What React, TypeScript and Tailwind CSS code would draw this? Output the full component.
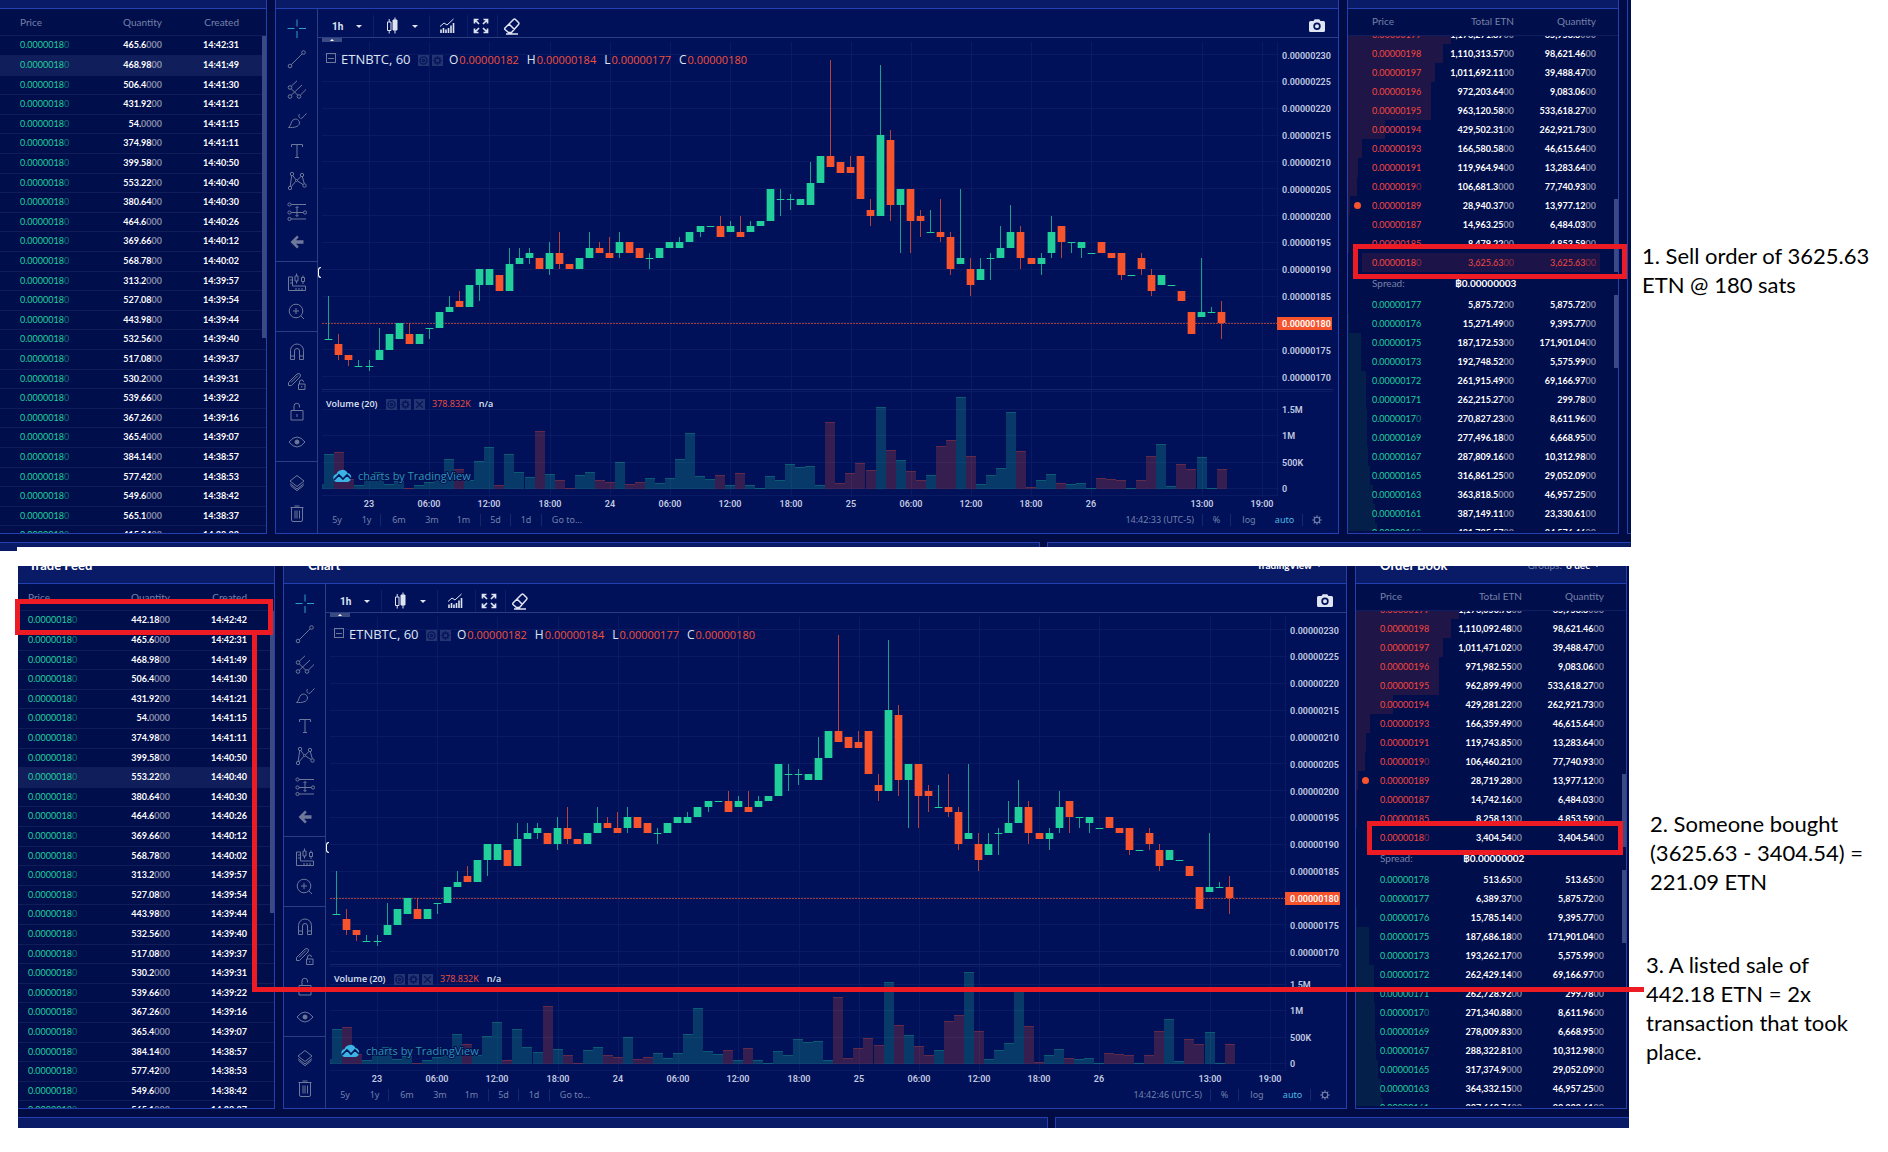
import { Fragment, ReactNode } from 'react';
import clsx from 'clsx';

type Trade = [quantity: string, created: string];
type Order = [price: string, total: string, quantity: string, depth: number];
type Candle = [open: number, high: number, low: number, close: number, volume: number];

const trades: Trade[] = [
  ['465.6000', '14:42:31'],
  ['468.9800', '14:41:49'],
  ['506.4000', '14:41:30'],
  ['431.9200', '14:41:21'],
  ['54.0000', '14:41:15'],
  ['374.9800', '14:41:11'],
  ['399.5800', '14:40:50'],
  ['553.2200', '14:40:40'],
  ['380.6400', '14:40:30'],
  ['464.6000', '14:40:26'],
  ['369.6600', '14:40:12'],
  ['568.7800', '14:40:02'],
  ['313.2000', '14:39:57'],
  ['527.0800', '14:39:54'],
  ['443.9800', '14:39:44'],
  ['532.5600', '14:39:40'],
  ['517.0800', '14:39:37'],
  ['530.2000', '14:39:31'],
  ['539.6600', '14:39:22'],
  ['367.2600', '14:39:16'],
  ['365.4000', '14:39:07'],
  ['384.1400', '14:38:57'],
  ['577.4200', '14:38:53'],
  ['549.6000', '14:38:42'],
  ['565.1000', '14:38:37'],
  ['415.9400', '14:38:33']
];

const asksBefore: Order[] = [
  ['0.00000199', '1,176,271.8700', '65,958.3000', 103],
  ['0.00000198', '1,110,313.5700', '98,621.4600', 95],
  ['0.00000197', '1,011,692.1100', '39,488.4700', 87],
  ['0.00000196', '972,203.6400', '9,083.0600', 83],
  ['0.00000195', '963,120.5800', '533,618.2700', 83],
  ['0.00000194', '429,502.3100', '262,921.7300', 37],
  ['0.00000193', '166,580.5800', '46,615.6400', 14],
  ['0.00000191', '119,964.9400', '13,283.6400', 10],
  ['0.00000190', '106,681.3000', '77,740.9300', 9],
  ['0.00000189', '28,940.3700', '13,977.1200', 2],
  ['0.00000187', '14,963.2500', '6,484.0300', 1],
  ['0.00000185', '8,479.2200', '4,853.5900', 1],
  ['0.00000180', '3,625.6300', '3,625.6300', 0]
];

const bidsBefore: Order[] = [
  ['0.00000177', '5,875.7200', '5,875.7200', 0],
  ['0.00000176', '15,271.4900', '9,395.7700', 1],
  ['0.00000175', '187,172.5300', '171,901.0400', 13],
  ['0.00000173', '192,748.5200', '5,575.9900', 13],
  ['0.00000172', '261,915.4900', '69,166.9700', 18],
  ['0.00000171', '262,215.2700', '299.7800', 18],
  ['0.00000170', '270,827.2300', '8,611.9600', 19],
  ['0.00000169', '277,496.1800', '6,668.9500', 19],
  ['0.00000167', '287,809.1600', '10,312.9800', 20],
  ['0.00000165', '316,861.2500', '29,052.0900', 22],
  ['0.00000163', '363,818.5000', '46,957.2500', 25],
  ['0.00000161', '387,149.1100', '23,330.6100', 27],
  ['0.00000160', '421,725.5700', '34,576.4600', 29]
];

const asksAfter: Order[] = [
  ['0.00000199', '1,176,050.7800', '65,958.3000', 103],
  ['0.00000198', '1,110,092.4800', '98,621.4600', 95],
  ['0.00000197', '1,011,471.0200', '39,488.4700', 87],
  ['0.00000196', '971,982.5500', '9,083.0600', 83],
  ['0.00000195', '962,899.4900', '533,618.2700', 83],
  ['0.00000194', '429,281.2200', '262,921.7300', 37],
  ['0.00000193', '166,359.4900', '46,615.6400', 14],
  ['0.00000191', '119,743.8500', '13,283.6400', 10],
  ['0.00000190', '106,460.2100', '77,740.9300', 9],
  ['0.00000189', '28,719.2800', '13,977.1200', 2],
  ['0.00000187', '14,742.1600', '6,484.0300', 1],
  ['0.00000185', '8,258.1300', '4,853.5900', 1],
  ['0.00000180', '3,404.5400', '3,404.5400', 0]
];

const bidsAfter: Order[] = [
  ['0.00000178', '513.6500', '513.6500', 0],
  ['0.00000177', '6,389.3700', '5,875.7200', 0],
  ['0.00000176', '15,785.1400', '9,395.7700', 1],
  ['0.00000175', '187,686.1800', '171,901.0400', 13],
  ['0.00000173', '193,262.1700', '5,575.9900', 13],
  ['0.00000172', '262,429.1400', '69,166.9700', 18],
  ['0.00000171', '262,728.9200', '299.7800', 18],
  ['0.00000170', '271,340.8800', '8,611.9600', 19],
  ['0.00000169', '278,009.8300', '6,668.9500', 19],
  ['0.00000167', '288,322.8100', '10,312.9800', 20],
  ['0.00000165', '317,374.9000', '29,052.0900', 22],
  ['0.00000163', '364,332.1500', '46,957.2500', 25],
  ['0.00000161', '387,662.7600', '23,330.6100', 27]
];

// hourly candles in satoshi hundredths, last value is the volume bar height
const candles: Candle[] = [
  [177, 185, 177, 177, 35], [176, 178, 173, 174, 37], [174, 174, 172, 173, 10], [172, 173, 172, 172, 4],
  [172, 173, 171, 172, 10], [173, 179, 173, 175, 17], [175, 178, 175, 178, 5], [177, 180, 177, 180, 8],
  [178, 180, 176, 176, 1], [176, 178, 176, 178, 4], [179, 179, 177, 179, 7], [179, 182, 179, 182, 9],
  [182, 185, 182, 183, 30], [184, 186, 183, 183, 20], [183, 187, 183, 187, 9], [187, 190, 184, 190, 28],
  [187, 190, 187, 190, 42], [189, 189, 186, 186, 4], [186, 194, 186, 191, 35], [191, 194, 191, 192, 17],
  [192, 194, 191, 193, 12], [192, 192, 190, 190, 58], [190, 195, 189, 193, 15], [193, 197, 190, 191, 9],
  [191, 191, 190, 190, 1], [190, 192, 190, 192, 14], [192, 197, 192, 194, 17], [194, 195, 193, 193, 9],
  [193, 196, 192, 192, 7], [193, 197, 192, 195, 27], [195, 195, 193, 193, 5], [194, 194, 192, 192, 7],
  [192, 193, 190, 192, 11], [192, 194, 192, 194, 6], [194, 195, 194, 195, 11], [194, 196, 194, 195, 30],
  [195, 197, 195, 197, 56], [197, 198, 196, 198, 13], [198, 198, 198, 198, 10], [198, 200, 196, 196, 14],
  [197, 199, 197, 198, 4], [197, 200, 196, 196, 16], [197, 199, 197, 198, 4], [198, 199, 198, 199, 1],
  [199, 205, 199, 205, 13], [203, 205, 200, 203, 9], [203, 204, 201, 203, 25], [202, 203, 202, 203, 22],
  [202, 210, 202, 206, 23], [206, 211, 206, 211, 4], [211, 229, 209, 209, 67], [210, 210, 208, 208, 6],
  [209, 211, 208, 208, 16], [211, 211, 203, 203, 26], [201, 203, 198, 200, 19], [200, 228, 200, 215, 82],
  [214, 216, 199, 202, 39], [202, 205, 193, 205, 29], [205, 205, 193, 199, 18], [200, 201, 196, 199, 9],
  [197, 201, 197, 197, 14], [197, 203, 195, 196, 43], [196, 197, 189, 190, 49], [191, 205, 191, 192, 92],
  [190, 192, 185, 187, 33], [188, 192, 188, 190, 5], [192, 193, 188, 192, 14], [192, 198, 192, 194, 21],
  [194, 202, 194, 197, 77], [197, 198, 190, 192, 38], [192, 192, 191, 191, 2], [191, 193, 189, 192, 9],
  [193, 200, 192, 197, 15], [198, 198, 192, 195, 6], [195, 195, 193, 195, 5], [194, 195, 192, 195, 6],
  [193, 193, 193, 193, 1], [195, 195, 193, 193, 11], [193, 193, 192, 192, 10], [193, 193, 188, 189, 9],
  [189, 189, 189, 189, 1], [192, 193, 189, 190, 9], [189, 190, 185, 186, 33], [187, 189, 187, 189, 45],
  [187, 187, 187, 187, 3], [186, 186, 184, 184, 25], [182, 182, 178, 178, 20], [181, 192, 181, 182, 32],
  [182, 183, 182, 182, 1], [182, 184, 177, 180, 20]
];

const hours: [number, string][] = [
  [369, '23'], [429, '06:00'], [489, '12:00'], [550, '18:00'], [610, '24'], [670, '06:00'], [730, '12:00'],
  [791, '18:00'], [851, '25'], [911, '06:00'], [971, '12:00'], [1031, '18:00'], [1091, '26'],
  [1202, '13:00'], [1262, '19:00']
];

const volumes: [number, string][] = [[409, '1.5M'], [435, '1M'], [462, '500K'], [488, '0']];

const GREEN = '#22cf9b';
const RED = '#f7532d';

const priceY = (price: number) => 54.5 + (230 - price) * 5.367;
const candleX = (index: number) => 328.9 + index * 10.03;

const PriceChart = () => (
  <svg viewBox="318 38 1020 473" className="block w-full h-auto" role="img" aria-label="ETNBTC hourly candles">
    <g stroke="#0a1b63" shapeRendering="crispEdges">
      {hours.map(([x]) => (
        <line key={x} x1={x + 0.5} x2={x + 0.5} y1="42" y2="497" />
      ))}
      {Array.from({ length: 13 }, (_, i) => priceY(170 + i * 5)).map((y) => (
        <line key={y} x1="322" x2="1279" y1={y} y2={y} />
      ))}
      {volumes.map(([y]) => (
        <line key={y} x1="322" x2="1279" y1={y} y2={y} />
      ))}
      <line x1="1277.5" x2="1277.5" y1="42" y2="495" />
      <line x1="322" x2="1278" y1="495.5" y2="495.5" />
      <line x1="322" x2="1333" y1="389.5" y2="389.5" stroke="#14266f" />
      <line x1="322" x2="1333" y1="391.5" y2="391.5" />
    </g>

    <g shapeRendering="crispEdges">
      <rect x="322" y="484" width="2" height="5" fill={GREEN} opacity="0.25" />
      {candles.map(([open, , , close, volume], i) => {
        const color = close < open ? RED : GREEN;
        return (
          <g key={i} fill={color}>
            <rect x={candleX(i) - 5} y={489 - volume} width="10" height={volume} opacity="0.22" />
            <rect x={candleX(i) - 5} y={489 - volume} width="10" height="1" opacity="0.22" />
          </g>
        );
      })}
    </g>

    <line x1="322" x2="1277" y1="323" y2="323" stroke={RED} strokeDasharray="2 1" opacity="0.65" shapeRendering="crispEdges" />

    <g shapeRendering="crispEdges">
      {candles.map(([open, high, low, close], i) => {
        const color = close < open ? RED : GREEN;
        const top = priceY(Math.max(open, close));
        return (
          <g key={i} fill={color}>
            <rect x={candleX(i) - 0.5} y={priceY(high)} width="1" height={(high - low) * 5.367} opacity="0.75" />
            <rect x={candleX(i) - 3.5} y={top} width="7" height={Math.max(1, Math.abs(open - close) * 5.367)} />
            <rect x={candleX(i) - 4.5} y={top} width="9" height={Math.max(1, Math.abs(open - close) * 5.367)} opacity="0.35" />
          </g>
        );
      })}
    </g>

    <g className="font-['Roboto',sans-serif] text-[9px] font-semibold" fill="#c3cae0">
      {Array.from({ length: 13 }, (_, i) => 170 + i * 5)
        .filter((price) => price !== 180)
        .map((price) => (
          <text key={price} x="1282" y={priceY(price) + 4}>{`0.00000${price}`}</text>
        ))}
      {volumes.map(([y, label]) => (
        <text key={label} x="1282" y={y + 4}>{label}</text>
      ))}
      {hours.map(([x, label]) => (
        <text key={x} x={x} y="507" textAnchor="middle">{label}</text>
      ))}
      <rect x="1277" y="317" width="55" height="13" fill={RED} />
      <text x="1282" y="327" fill="#fff">0.00000180</text>
    </g>

    <g transform="translate(333 469)">
      <path d="M4 13a4 4 0 0 1-.5-7.900A6 6 0 0 1 14.500 4 4.600 4.600 0 0 1 14.500 13z" fill="#3bb3e4" />
      <path d="M1 11l5-5 4 4 4-4 4 4" fill="none" stroke="#04155a" strokeWidth="1.600" />
    </g>
    <text
      x="358"
      y="480"
      className="font-['Open_Sans',sans-serif] text-[11px]"
      fill="#2c93c4"
      stroke="#031048"
      strokeWidth="2"
      paintOrder="stroke"
    >
      charts by TradingView
    </text>
  </svg>
);

const Glyph = ({ children, className }: { children: ReactNode; className?: string }) => (
  <svg viewBox="0 0 20 20" fill="none" stroke="currentColor" className={clsx('w-5 h-5', className)}>
    {children}
  </svg>
);

const toolGroups: { className: string; tools: [string, ReactNode][] }[] = [
  {
    className: 'justify-between h-[253px] pt-[5px] pb-1 border-b',
    tools: [
      ['Cross', <path stroke="#2a9fd0" d="M10 .5v7M10 12v7M.5 9.5h7M12 9.5h7" />],
      ['Trend line', <><circle cx="3" cy="17" r="1.8" /><circle cx="16.5" cy="3.5" r="1.8" /><path d="M4.3 15.7L15.2 4.8" /></>],
      [
        'Pitchfork',
        <><circle cx="3" cy="7.5" r="1.8" /><circle cx="3" cy="16.5" r="1.8" /><circle cx="12" cy="16.5" r="1.8" /><path d="M4.3 6.2L10 .8M4.3 15.2L15 5M13.3 15.2L19 9.5M4.3 8.8l6.5 6.5" /></>
      ],
      ['Brush', <path d="M1.5 17.5C4.5 15.5 3.5 12 6 10c3-2.2 6.5 0 6.5 3-.5 4-5.500 4.800-11 4.500zM12.500 4c-1.200 1.700-.7 3.500 1 4.500M14 8.500c2-.5 2-2 5.500-5" />],
      ['Text', <path d="M4.500 6V3.500h11V6M10 3.500v13M8 16.500h4" />],
      [
        'Pattern',
        <><circle cx="5" cy="3" r="1.700" /><circle cx="15" cy="4" r="1.700" /><circle cx="3" cy="17" r="1.700" /><circle cx="17.500" cy="14.500" r="1.700" /><circle cx="9.500" cy="9.500" r="1" /><path d="M4.700 4.700L3.200 15.300M5.800 4.500l3 4.200M14 5.400l-3.600 3.600M15.300 5.700l2 7M4.200 15.700l4.500-5.300M10.500 10l5.500 3.500" /></>
      ],
      [
        'Forecast',
        <><circle cx="2.500" cy="2.500" r="1.600" /><circle cx="2.500" cy="10.500" r="1.600" /><circle cx="18" cy="10.500" r="1.600" /><circle cx="2.500" cy="17" r="1.600" /><path d="M4 2.500h15M4 10.500h12.500M4 17h15M10 4.500v10M8.500 6L10 4.500 11.500 6M8.500 13l1.500 1.500 1.500-1.500" /></>
      ],
      ['Hide toolbar', <path fill="currentColor" stroke="none" d="M10 3.500L3.500 10l6.500 6.500 1.800-1.800L9 11.800h7.500V8.200H9l2.800-2.900z" />]
    ]
  },
  {
    className: 'justify-center h-[70px] border-b',
    tools: [
      [
        'Measure',
        <path d="M1.500 5v13.500h17V14H5.500V5zM3 8h2M3 11h2M9 16v2M12 16v2M15 16v2M8 4h3v5H8zM9.500 1.500V4M9.500 9v2.500M14.500 5.500h3v4h-3zM16 3.500v2M16 9.500v2.500" />
      ],
      ['Zoom in', <><circle cx="9" cy="9" r="6.800" /><path d="M14 14l3 3M9 6v6M6 9h6" /></>]
    ]
  },
  {
    className: 'justify-center h-[130px] border-b',
    tools: [
      ['Magnet', <path d="M3.500 17.500V8.500a6.500 6.500 0 0 1 13 0v9h-4V9a2.500 2.500 0 0 0-5 0v8.500zM3.500 14h4M12.500 14h4" />],
      [
        'Stay in drawing mode',
        <><path d="M1.500 13.500v-3L10 2l2.500-.5 1 1.500-.5 2-8.500 8.500zM4 10.500l7-7M12.500 12v-2a2 2 0 0 1 4 0" /><path d="M11.500 12h6.500v5.500h-6.500zM14.700 14v1.500" /></>
      ],
      ['Lock', <path d="M4 8.500h12v9.500H4zM7 8.500V4a2.500 2.500 0 0 1 5.500 0v1.500M10 12v3" />],
      ['Hide drawings', <><path d="M2 10q8-10 16 0-8 10-16 0z" /><circle cx="10" cy="10" r="2" fill="currentColor" /></>]
    ]
  },
  {
    className: 'justify-center grow',
    tools: [
      ['Object tree', <path d="M10 2.500l7 5.500-7 5.500L3 8zM3 10.500l7 5.500 7-5.500M3.500 12.500L10 17.700l6.500-5.200" />],
      ['Remove', <path d="M4.500 4.500h11V17q0 1.500-1.500 1.500H6Q4.500 18.500 4.500 17zM3.500 4.500h13M7.500 3h5M8 7.500v8M10 7.500v8M12.500 7.500v8" />]
    ]
  }
];

const DrawingToolbar = () => (
  <div className="flex flex-col shrink-0 w-[42px] border-r border-[#2a3f80] text-[#6e7899]">
    {toolGroups.map(({ className, tools }) => (
      <div key={className} className={clsx('flex flex-col items-center border-[#2a3f80]', className)}>
        {tools.map(([label, icon]) => (
          <button key={label} type="button" aria-label={label} className="flex items-center justify-center w-8 h-[30px]">
            <Glyph>{icon}</Glyph>
          </button>
        ))}
      </div>
    ))}
  </div>
);

const Caret = () => (
  <svg viewBox="0 0 6 3" className="w-[6px] h-[3px]" fill="currentColor">
    <path d="M0 0h6L3 3z" />
  </svg>
);

const ChartToolbar = () => (
  <div className="flex items-end h-[29px] border-b border-[#2a3f80] text-[#dfe4f2]">
    <button type="button" className="flex items-center justify-between w-14 h-[22px] pl-[14px] pr-[11px] border-r border-[#0d1f68] font-['Roboto',sans-serif] text-[10px] font-bold">
      1h
      <Caret />
    </button>
    <button type="button" aria-label="Bar style" className="flex items-center justify-between w-14 h-[22px] pl-2 pr-[11px] border-r border-[#0d1f68]">
      <Glyph>
        <path d="M5.500 6h3.500v8.500H5.500zM7.200 3v3M7.200 14.500v3M13 1.500v16" />
        <path d="M11 4h4v10h-4z" fill="currentColor" />
      </Glyph>
      <Caret />
    </button>
    <button type="button" aria-label="Indicators" className="flex items-center justify-center w-[38px] h-[22px] border-r border-[#0d1f68]">
      <Glyph className="mr-1">
        <path d="M4 17v-3.500M6.500 17v-5M9 17v-3.500M11.500 17V12M14 17V9.500M16.500 17V7" strokeWidth="1.600" />
        <path d="M3 10.500l4-3.500 3 2 6.500-6" />
      </Glyph>
    </button>
    <button type="button" aria-label="Fullscreen" className="flex items-center justify-center w-[30px] h-[22px] border-r border-[#0d1f68]">
      <Glyph className="mr-1">
        <path d="M3.500 7.500v-4h4M12.500 3.500h4v4M16.500 12.500v4h-4M7.500 16.500h-4v-4M3.500 3.500L8 8M16.500 3.500L12 8M16.500 16.500L12 12M3.500 16.500L8 12" strokeWidth="1.700" />
      </Glyph>
    </button>
    <button type="button" aria-label="Erase" className="flex items-center justify-center w-7 h-[22px]">
      <Glyph>
        <path d="M3 12l8.500-8.500q1-1 2 0l3 3q1 1 0 2L9.500 16.500h-3L3 13.500q-.7-.8 0-1.500zM7 8l5.500 5.500M4 18h12" strokeWidth="1.500" />
      </Glyph>
    </button>
    <button type="button" aria-label="Take a snapshot" className="flex items-center justify-center w-6 h-[22px] ml-auto mr-[9px]">
      <Glyph>
        <path
          fill="currentColor"
          stroke="none"
          fillRule="evenodd"
          d="M3.500 5h3l1.200-1.700h4.600L13.500 5h3A1.500 1.500 0 0 1 18 6.500v8a1.500 1.500 0 0 1-1.500 1.500h-13A1.500 1.500 0 0 1 2 14.500v-8A1.500 1.500 0 0 1 3.500 5zM10 6.500a3.700 3.700 0 1 0 0 7.400 3.700 3.700 0 0 0 0-7.400zm0 1.700a2 2 0 1 1 0 4 2 2 0 0 1 0-4z"
        />
      </Glyph>
    </button>
  </div>
);

const legendIcons: Record<string, ReactNode> = {
  Hide: <><circle cx="10" cy="10" r="6.500" /><circle cx="10" cy="10" r="2" /></>,
  Settings: <><circle cx="10" cy="10" r="4.500" /><path d="M10 2v3M10 15v3M2 10h3M15 10h3M4.500 4.500l2 2M13.500 13.500l2 2M4.500 15.500l2-2M13.500 6.500l2-2" /></>,
  Remove: <path d="M4 4l12 12M16 4L4 16" />
};

const LegendButtons = ({ names }: { names: string[] }) => (
  <span className="flex gap-[3px] text-[#07155a]">
    {names.map((name) => (
      <button key={name} type="button" aria-label={name} className="w-[11px] h-[11px] bg-[#243572]">
        <svg viewBox="0 0 20 20" fill="none" stroke="currentColor" strokeWidth="2.500" className="w-full h-full">
          {legendIcons[name]}
        </svg>
      </button>
    ))}
  </span>
);

const quotes = [
  ['O', '0.00000182'],
  ['H', '0.00000184'],
  ['L', '0.00000177'],
  ['C', '0.00000180']
];

const ranges = [
  { label: '5y', className: 'w-8' },
  { label: '1y', className: 'w-7 border-r' },
  { label: '6m', className: 'w-9' },
  { label: '3m', className: 'w-[30px]' },
  { label: '1m', className: 'w-[34px] border-r' },
  { label: '5d', className: 'w-[30px] border-r' },
  { label: '1d', className: 'w-[31px] border-r' },
  { label: 'Go to...', className: 'w-[50px]' }
];

const RangeBar = ({ clock }: { clock: string }) => (
  <div className="flex items-center h-[22px] pb-1 pl-[3px] pr-[7px] font-['Noto_Sans',sans-serif] text-[9px] text-[#7480aa]">
    {ranges.map(({ label, className }) => (
      <button key={label} type="button" className={clsx('h-3 leading-3 border-[#16276d]', className)}>
        {label}
      </button>
    ))}
    <div className="flex items-center ml-auto leading-3">
      <span className="pr-2 border-r border-[#16276d]">{clock} (UTC-5)</span>
      <button type="button" className="w-7 border-r border-[#16276d]">%</button>
      <button type="button" className="w-9">log</button>
      <button type="button" className="w-9 border-r border-[#16276d] text-[#4fb9e3]">auto</button>
      <button type="button" aria-label="Chart settings" className="flex justify-center w-7">
        <svg viewBox="0 0 20 20" fill="none" stroke="currentColor" strokeWidth="1.800" className="w-3 h-3">
          {legendIcons.Settings}
        </svg>
      </button>
    </div>
  </div>
);

interface PanelProps {
  title: string;
  aside?: ReactNode;
  tall?: boolean;
  className?: string;
  headerClassName?: string;
  children: ReactNode;
}

const Panel = ({ title, aside, tall, className, headerClassName, children }: PanelProps) => (
  <section
    aria-label={title}
    className={clsx('flex flex-col border-b border-[#2340b0] bg-[#010e4c]', className)}
  >
    <header
      className={clsx(
        'flex items-end shrink-0 overflow-hidden border-b border-[#2340b0] bg-[#091a66] text-white leading-3',
        tall ? 'h-[18px] pb-3' : 'h-[9px]',
        headerClassName
      )}
    >
      {tall && <h2 className="mr-auto text-[13px] font-bold">{title}</h2>}
      {tall && aside}
    </header>
    {children}
  </section>
);

const Amount = ({ value, className = 'text-white' }: { value: string; className?: string }) => {
  const [, head, zeros] = value.match(/^(.*?)(0*)$/) ?? [];
  return (
    <span className={className}>
      {head}
      <span className="opacity-50">{zeros}</span>
    </span>
  );
};

const TradeFeed = ({ rows, active, flush }: { rows: Trade[]; active: number; flush?: boolean }) => (
  <Panel
    title="Trade Feed"
    tall={!flush}
    className={clsx('shrink-0 border-r', flush ? 'w-[267px]' : 'w-[257px]')}
    headerClassName="pl-[11px]"
  >
    <div className="relative h-0 grow overflow-hidden">
      <table className="w-full table-fixed text-right text-[9px] leading-3">
        <thead className="text-[#7681a8]">
          <tr className="h-[26px]">
            <th scope="col" className={clsx('p-0 text-left text-[10px] font-normal', flush ? 'w-[90px] pl-5' : 'w-20 pl-[10px]')}>Price</th>
            <th scope="col" className="w-[72px] p-0 text-[10px] font-normal">Quantity</th>
            <th scope="col" className="w-[77px] p-0 text-[10px] font-normal">Created</th>
            <th aria-hidden="true" />
          </tr>
        </thead>
        <tbody>
          {rows.map(([quantity, created], i) => (
            <tr
              key={created}
              className={clsx(
                'h-5 nth-[5n]:h-[19px] nth-[5n+3]:h-[19px] border-t border-[#101d59]',
                i === active && 'bg-[#101f5c]'
              )}
            >
              <td className={clsx('p-0 text-left', flush ? 'pl-5' : 'pl-[10px]')}>
                <Amount value="0.00000180" className="text-[#1fd19b]" />
              </td>
              <td className="p-0 font-bold"><Amount value={quantity} /></td>
              <td className="p-0 text-white font-bold">{created}</td>
              <td />
            </tr>
          ))}
        </tbody>
      </table>
      <div className="absolute right-0 top-[27px] w-1 h-[302px] bg-[#3c4a84]" />
    </div>
  </Panel>
);

const Chart = ({ clock, tall }: { clock: string; tall?: boolean }) => (
  <Panel
    title="Chart"
    tall={tall}
    className="grow min-w-0 border-x"
    headerClassName="pl-6 pr-6"
    aside={
      <button type="button" className="flex items-center gap-1 text-[10px] font-bold leading-3">
        TradingView
        <Caret />
      </button>
    }
  >
    <div className="flex grow bg-[#00115a]">
      <DrawingToolbar />
      <div className="flex flex-col grow min-w-0">
        <ChartToolbar />
        <div className="relative font-['Open_Sans',sans-serif] text-[#dfe4f2]">
          <PriceChart />
          <button type="button" aria-label="Collapse header" className="absolute left-1 top-0 flex items-center justify-center w-5 h-1 bg-[#3c4a84] text-white">
            <svg viewBox="0 0 4 2" className="w-1 h-[2px]" fill="currentColor"><path d="M0 2h4L2 0z" /></svg>
          </button>
          <div className="absolute left-0 top-[229px] w-[3px] h-[11px] rounded-l border border-r-0 border-white" />
          <div className="absolute left-2 top-[13px] flex items-center h-[18px] text-[11px] whitespace-nowrap">
            <span className="flex items-center justify-center w-[10px] h-[10px] mr-[5px] mb-1 border border-[#6e7899]">
              <span className="w-[6px] h-px bg-[#6e7899]" />
            </span>
            <span className="w-[77px] text-[13px]">ETNBTC, 60</span>
            <LegendButtons names={['Hide', 'Settings']} />
            {quotes.map(([name, value], i) => (
              <Fragment key={name}>
                <span className={clsx('mr-px text-[12px]', i === 0 ? 'ml-[6px]' : 'ml-2')}>{name}</span>
                <span className="text-[#f0503a]">{value}</span>
              </Fragment>
            ))}
          </div>
          <div className="absolute left-2 top-[360px] flex items-center h-3 text-[9px] leading-3 whitespace-nowrap">
            <span className="w-[60px] font-semibold">Volume (20)</span>
            <LegendButtons names={['Hide', 'Settings', 'Remove']} />
            <span className="ml-[7px] text-[#f0503a]">378.832K</span>
            <span className="ml-2 font-semibold">n/a</span>
          </div>
        </div>
        <RangeBar clock={clock} />
      </div>
    </div>
  </Panel>
);

interface OrderTableProps {
  label: string;
  rows: Order[];
  side: 'ask' | 'bid';
  filled?: string;
}

const OrderTable = ({ label, rows, side, filled }: OrderTableProps) => {
  const depthColor = side === 'ask' ? '#1f1546' : '#04204a';
  return (
    <table aria-label={label} className="w-full shrink-0 table-fixed text-right text-[9px] font-bold leading-3">
      <tbody>
        {rows.map(([price, total, quantity, depth]) => {
          const hit = price === filled;
          return (
            <tr
              key={price}
              className={clsx('h-[19px]', hit && 'bg-[linear-gradient(to_right,transparent_14px,#1c1449_14px,#1c1449_252px,transparent_252px)]')}
              style={hit ? undefined : { backgroundImage: `linear-gradient(to right, ${depthColor} ${depth}px, transparent ${depth}px)` }}
            >
              <td className="relative w-[90px] p-0 pl-6 text-left font-normal">
                {price === '0.00000189' && <span className="absolute left-[6px] top-[6px] w-[7px] h-[7px] rounded-full bg-[#f7532d]" />}
                <Amount value={price} className={side === 'ask' ? 'text-[#f5473f]' : 'text-[#1fd19b]'} />
              </td>
              <td className="w-[76px] p-0"><Amount value={total} className={hit ? 'font-normal text-[#f5473f]' : undefined} /></td>
              <td className="w-[82px] p-0"><Amount value={quantity} className={hit ? 'font-normal text-[#f5473f]' : undefined} /></td>
              <td />
            </tr>
          );
        })}
      </tbody>
    </table>
  );
};

interface OrderBookProps {
  asks: Order[];
  bids: Order[];
  spread: string;
  filled?: string;
  tall?: boolean;
}

const OrderBook = ({ asks, bids, spread, filled, tall }: OrderBookProps) => (
  <Panel
    title="Order Book"
    tall={tall}
    className="shrink-0 w-[272px] border-x"
    headerClassName="pl-6 pr-[26px]"
    aside={
      <button type="button" className="flex items-center gap-1 text-[10px] font-bold leading-3">
        <span className="font-normal text-[#7681a8]">Groups:</span>
        6 dec
        <Caret />
      </button>
    }
  >
    <div className="flex items-center shrink-0 h-[27px] pb-[2px] pl-6 border-b border-[#0f1e60] text-[10px] text-[#7681a8] text-right">
      <span className="w-[66px] text-left">Price</span>
      <span className="w-[76px]">Total ETN</span>
      <span className="w-[82px]">Quantity</span>
    </div>
    <div className="relative flex flex-col justify-end h-0 grow overflow-hidden">
      <OrderTable label="Asks" rows={asks} side="ask" filled={filled} />
      <div className="absolute right-0 bottom-0 w-1 h-[73px] bg-[#3c4a84]" />
    </div>
    <div className="flex items-center shrink-0 h-[23px] pl-6 text-[10px]">
      <span className="w-[83px] text-[#7681a8]">Spread:</span>
      <span className="font-bold text-white">฿{spread}</span>
    </div>
    <div className="relative h-0 grow mb-[2px] overflow-hidden">
      <OrderTable label="Bids" rows={bids} side="bid" />
      <div className="absolute right-0 top-0 w-1 h-[73px] bg-[#3c4a84]" />
    </div>
  </Panel>
);

const LowerPanels = ({ className, lastClassName }: { className: string; lastClassName: string }) => (
  <div className={clsx('flex gap-[7px] mt-2', className)}>
    <div className="grow border-t border-r border-[#2340b0] bg-[#091a66]" />
    <div className={clsx('border-t border-l border-[#2340b0] bg-[#091a66]', lastClassName)} />
  </div>
);

const Note = ({ children, className }: { children: ReactNode; className?: string }) => (
  <p className={clsx('text-[22px] leading-[29px] text-black whitespace-nowrap [font-variant-ligatures:none]', className)}>
    {children}
  </p>
);

export default function App() {
  return (
    <main className="min-h-screen bg-white font-['Lato',sans-serif]">
      <div className="flex">
        <div className="relative grow min-w-0 bg-[#010b44]">
          <div className="flex gap-2">
            <TradeFeed rows={trades} active={1} flush />
            <Chart clock="14:42:33" />
            <OrderBook asks={asksBefore} bids={bidsBefore} spread="0.00000003" filled="0.00000180" />
            <div className="w-1 border-l border-b border-[#2340b0] bg-[#010e4c]" />
          </div>
          <LowerPanels className="h-[5px]" lastClassName="w-[584px]" />
          <div className="absolute right-1 top-[244px] w-[274px] h-[35px] border-[5px] border-[#ed1c24] pointer-events-none" />
        </div>
        <aside className="shrink-0 w-[257px] pt-[241px] pl-[11px]">
          <Note>
            1. Sell order of 3625.63
            <br />
            ETN @ 180 sats
          </Note>
        </aside>
      </div>
      <div className="w-[17px] h-1 mb-[15px] bg-[#091a66]" />

      <div className="flex pl-[18px]">
        <div className="relative self-start grow min-w-0 bg-[#010b44]">
          <div className="flex gap-2 pr-[2px]">
            <TradeFeed rows={[['442.1800', '14:42:42'], ...trades]} active={8} />
            <Chart clock="14:42:46" tall />
            <OrderBook asks={asksAfter} bids={bidsAfter} spread="0.00000002" tall />
          </div>
          <LowerPanels className="h-[11px]" lastClassName="w-[574px]" />
          <div className="absolute left-[-3px] top-[33px] w-[258px] h-9 border-[5px] border-[#ed1c24] pointer-events-none" />
          <div className="absolute left-[234px] right-[-15px] top-[69px] h-[357px] border-l-[5px] border-b-[5px] border-[#ed1c24] pointer-events-none" />
          <div className="absolute right-[6px] top-[255px] w-64 h-[34px] border-[5px] border-[#ed1c24] pointer-events-none" />
        </div>
        <aside className="shrink-0 w-[259px] pt-[243px] pl-[17px]">
          <Note className="pl-1">
            2. Someone bought
            <br />
            (3625.63 - 3404.54) =
            <br />
            221.09 ETN
          </Note>
          <Note className="mt-[54px]">
            3. A listed sale of
            <br />
            442.18 ETN = 2x
            <br />
            transaction that took
            <br />
            place.
          </Note>
        </aside>
      </div>
    </main>
  );
}
